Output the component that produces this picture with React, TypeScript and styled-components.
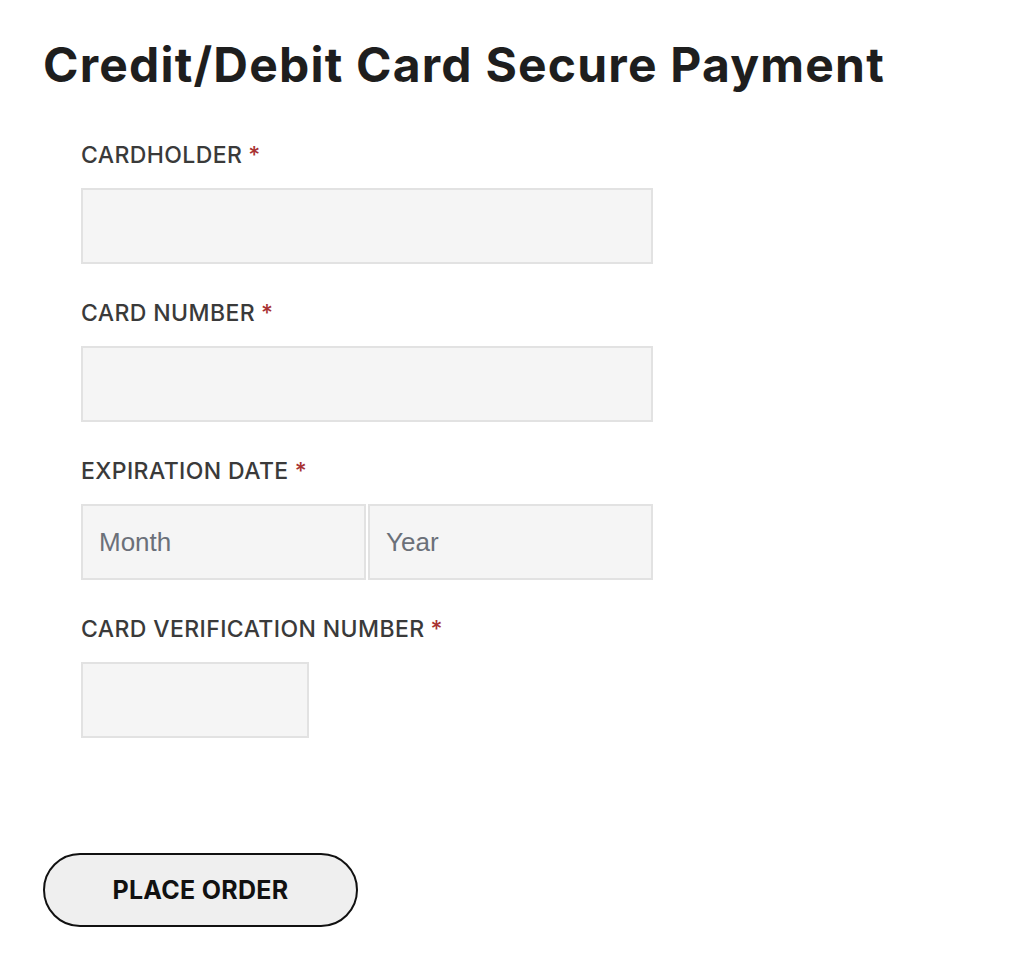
import styled, { createGlobalStyle } from 'styled-components';

const GlobalStyle = createGlobalStyle`
  html, body {
    margin: 0;
    padding: 0;
    background: #fff;
  }
  body {
    font-family: Inter, "Liberation Sans", sans-serif;
    color: #222;
  }
`;

const Page = styled.div`
  box-sizing: border-box;
  width: 1024px;
  min-height: 963px;
  padding: 36px 0 0 43px;
`;

const Title = styled.h2`
  margin: 0;
  font-family: Inter, sans-serif;
  font-weight: 700;
  font-size: 48px;
  line-height: 58px;
  color: #1e1e1e;
  letter-spacing: 1.2px;
`;

const Form = styled.form`
  display: flex;
  flex-direction: column;
  align-items: flex-start;
  padding: 48px 0 0 38px;
`;

const Field = styled.div`
  display: flex;
  flex-direction: column;
  gap: 20px;
  margin-bottom: 36px;
`;

const Label = styled.label`
  font-family: Inter, sans-serif;
  font-weight: 500;
  font-size: 23px;
  line-height: 26px;
  color: #3a3a3a;
  letter-spacing: 0.4px;
  text-transform: uppercase;
`;

const Required = styled.span`
  color: #a83232;
  margin-left: 6px;
`;

const Input = styled.input<{ $width?: number }>`
  box-sizing: border-box;
  width: ${(p) => p.$width ?? 572}px;
  height: 76px;
  background: #f5f5f5;
  border: 2px solid #e2e2e2;
  border-radius: 0;
  padding: 0 16px;
  font-family: "Liberation Sans", Arial, sans-serif;
  font-size: 26px;
  color: #333;
  outline: none;

  &::placeholder {
    color: #6b7079;
  }
`;

const DateRow = styled.div`
  display: grid;
  grid-template-columns: 1fr 1fr;
  width: 572px;
  gap: 2px;
`;

const Half = styled(Input)`
  width: 100%;
  min-width: 0;
`;

const Button = styled.button`
  box-sizing: border-box;
  margin: 79px 0 0 -38px;
  width: 315px;
  height: 74px;
  border-radius: 37px;
  border: 2px solid #111;
  background: #efefef;
  font-family: Inter, sans-serif;
  font-weight: 700;
  font-size: 25px;
  letter-spacing: 0.3px;
  color: #111;
  cursor: pointer;
`;

export default function App() {
  return (
    <>
      <GlobalStyle />
      <Page>
        <Title>Credit/Debit Card Secure Payment</Title>
        <Form onSubmit={(e) => e.preventDefault()}>
          <Field>
            <Label>
              Cardholder<Required>*</Required>
            </Label>
            <Input type="text" />
          </Field>
          <Field>
            <Label>
              Card Number<Required>*</Required>
            </Label>
            <Input type="text" />
          </Field>
          <Field>
            <Label>
              Expiration Date<Required>*</Required>
            </Label>
            <DateRow>
              <Half type="text" placeholder="Month" />
              <Half type="text" placeholder="Year" />
            </DateRow>
          </Field>
          <Field>
            <Label>
              Card Verification Number<Required>*</Required>
            </Label>
            <Input type="text" $width={228} />
          </Field>
          <Button type="submit">PLACE ORDER</Button>
        </Form>
      </Page>
    </>
  );
}
